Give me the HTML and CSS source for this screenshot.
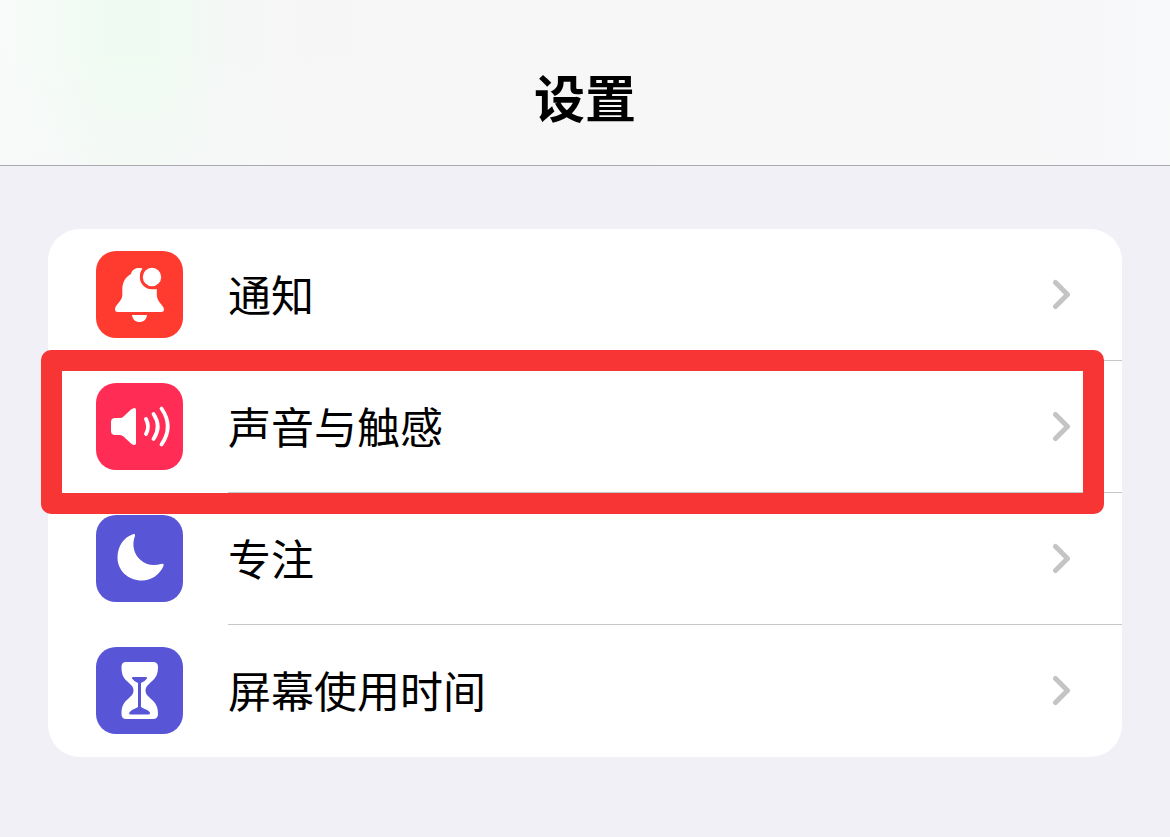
FILE: index.html
```html
<!DOCTYPE html>
<html lang="zh-CN">
<head>
<meta charset="utf-8">
<meta name="viewport" content="width=device-width, initial-scale=1">
<title>设置</title>
<link rel="stylesheet" href="styles.css">
</head>
<body>
<header class="navbar"><h1 class="title">设置</h1></header>
<main class="content">
  <nav class="group" aria-label="设置">
    <a class="row" href="#notifications">
      <svg class="icon icon-red" viewBox="0 0 87 87" aria-hidden="true">
        <path fill="#fff" d="M44 17C39 16.500 36 19 35 23C29.500 26 26.500 31 26.300 38V44C26 51 19 53.500 19 58.500Q19 61 22 61H65Q68 61 68 58.500C68 54 61 51.500 60.800 44V38C54 39 46.500 36 44.600 29C43.500 25 44 21 46.500 17.500Q45.500 17 44 17Z"/>
        <circle fill="#fff" stroke="#ff3b30" stroke-width="3" cx="56" cy="26" r="10.700"/>
        <path fill="#fff" d="M36 64H51C50.500 68.500 47.500 71 43.500 71S36.500 68.500 36 64Z"/>
      </svg>
      <span class="body"><span class="label">通知</span>
      <svg class="chevron" viewBox="0 0 19 31" aria-hidden="true"><path d="M3.500 3.500L15.500 15.500L3.500 27.500"/></svg></span>
    </a>
    <a class="row marked" href="#sounds">
      <svg class="icon icon-pink" viewBox="0 0 87 87" aria-hidden="true">
        <path fill="#fff" d="M19 35H24Q26 35 27.500 33.500L35 26.500Q37 25 38.500 25Q40 25 40 27V60Q40 62 38.500 62Q37 62 35 60.500L27.500 53.500Q26 52 24 52H19Q15 52 15 48V39Q15 35 19 35Z"/>
        <g fill="none" stroke="#fff" stroke-width="3.800" stroke-linecap="round"><path d="M50 36Q54 43.500 50 51"/><path d="M57.500 31Q66 43.500 57.500 56"/><path d="M65.500 25.500Q78 43.500 65.500 61.500"/></g>
      </svg>
      <span class="body"><span class="label">声音与触感</span>
      <svg class="chevron" viewBox="0 0 19 31" aria-hidden="true"><path d="M3.500 3.500L15.500 15.500L3.500 27.500"/></svg></span>
    </a>
    <a class="row" href="#focus">
      <svg class="icon icon-indigo" viewBox="0 0 87 87" aria-hidden="true">
        <path fill="#fff" d="M37.500 19Q39.500 18.500 39 21C35.500 30 38 39 44 44.500C50 50.500 58 51 65 49Q68.500 48 67.500 51C63.500 60 55 65.500 46 65.500C32 65.500 21.500 55.500 21.500 42.500C21.500 31 28 22 37.500 19Z"/>
      </svg>
      <span class="body"><span class="label">专注</span>
      <svg class="chevron" viewBox="0 0 19 31" aria-hidden="true"><path d="M3.500 3.500L15.500 15.500L3.500 27.500"/></svg></span>
    </a>
    <a class="row" href="#screen-time">
      <svg class="icon icon-indigo" viewBox="0 0 87 87" aria-hidden="true">
        <path fill="#fff" d="M30 15H57Q62 15 62 20C62 27 60 31 55 35L51 39Q49.500 41 49.500 43.500T51 48L55 52C60 56 62 60 62 67Q62 72 57 72H30Q25.500 72 25.500 67C25.500 60 27 56 32 52L36 48Q37.500 46 37.500 43.500T36 39L32 35C27 31 25.500 27 25.500 20Q25.500 15 30 15Z"/>
        <path fill="#5856d6" d="M37 30H50Q51.500 30 51 31.500Q49.500 34 45 36V60Q46.500 61 51 63Q54.500 65 54 66.500Q54 67.500 52 67.500H35Q33 67.500 33 66.500Q33 65 36 63Q40.500 61 42 60V36Q37.500 34 36 31.500Q35.500 30 37 30Z"/>
      </svg>
      <span class="body"><span class="label">屏幕使用时间</span>
      <svg class="chevron" viewBox="0 0 19 31" aria-hidden="true"><path d="M3.500 3.500L15.500 15.500L3.500 27.500"/></svg></span>
    </a>
  </nav>
</main>
</body>
</html>
```
FILE: styles.css
```css
* { box-sizing: border-box; }
body {
  margin: 0;
  min-height: 100vh;
  background: #f1f0f6;
  color: #000;
  font-family: "Noto Sans CJK SC", "Noto Sans", sans-serif;
}
.navbar {
  padding: 60px 16px 33px;
  border-bottom: 1px solid #a9abaf;
  background:
    linear-gradient(180deg, rgba(248, 248, 249, 0) 30%, rgba(248, 248, 249, 0.6) 100%),
    linear-gradient(90deg, #f8faf9 0%, #f4fbf6 5%, #effbf2 9%, #effbf2 14%, #f4f7f5 19%, #f6f6f6 26%, #f7f7f7 85%, #f7f7fa 92%, #f8f9fa 100%);
}
.title {
  margin: 0;
  font-size: 51px;
  line-height: 72px;
  font-weight: 700;
  text-align: center;
}
.content { padding: 63px 48px; }
.group {
  border-radius: 32px;
  background: #fff;
}
.row {
  display: flex;
  align-items: flex-start;
  gap: 45px;
  padding-left: 48px;
  color: inherit;
  text-decoration: none;
}
.icon {
  flex: none;
  width: 87px;
  height: 87px;
  margin-top: 22px;
  border-radius: 20px;
}
.icon-red { background: #ff3b30; }
.icon-pink { background: #ff2d55; }
.icon-indigo { background: #5856d6; }
.body {
  flex: 1;
  display: flex;
  align-items: center;
  justify-content: space-between;
  padding: 32px 51px 35px 0;
  border-bottom: 1px solid #c6c6c8;
}
.row:last-child .body { border-bottom-color: transparent; }
.label {
  font-size: 43px;
  line-height: 64px;
}
.chevron {
  flex: none;
  width: 19px;
  height: 31px;
  margin-top: 2px;
  fill: none;
  stroke: #c4c4c6;
  stroke-width: 5;
  stroke-linecap: round;
  stroke-linejoin: round;
}
.marked { position: relative; }
.marked::after {
  content: "";
  position: absolute;
  inset: -11px 18px -21px -7px;
  z-index: 1;
  border: 21px solid #f83535;
  border-radius: 10px;
  pointer-events: none;
}
```
